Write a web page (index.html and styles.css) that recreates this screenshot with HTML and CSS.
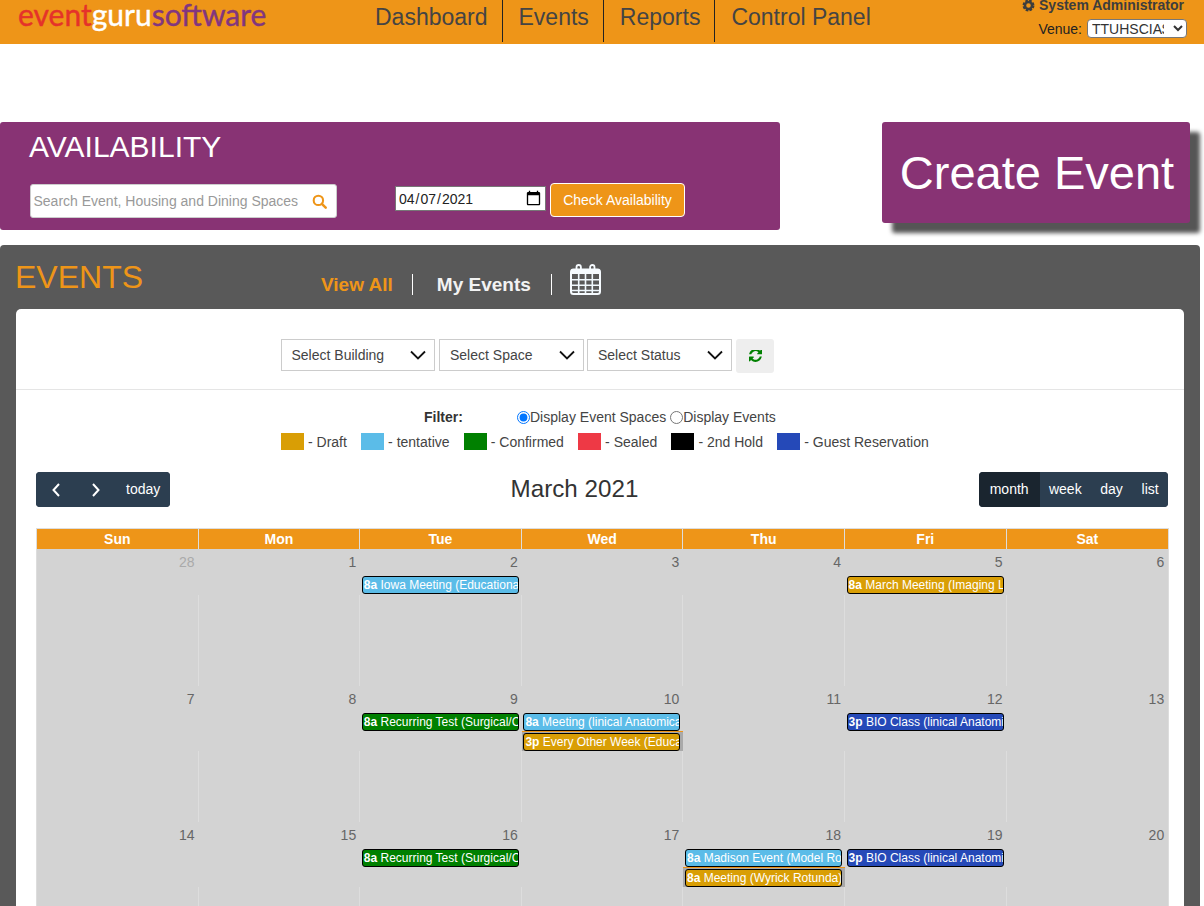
FILE: index.html
```html
<!DOCTYPE html>
<html lang="en">
<head>
<meta charset="utf-8">
<title>Event Guru Software</title>
<link rel="stylesheet" href="styles.css">
</head>
<body>
<header class="topbar">
  <div class="logo"><span class="logo-event">event</span><span class="logo-guru">guru</span><span class="logo-soft">software</span></div>
  <nav class="mainnav">
    <a class="navlink">Dashboard</a>
    <a class="navlink">Events</a>
    <a class="navlink">Reports</a>
    <a class="navlink navlink-last">Control Panel</a>
  </nav>
  <div class="userbox">
    <div class="username">
      <svg class="gear" viewBox="0 0 24 24"><circle cx="12" cy="12" r="8.5" fill="none" stroke="#3d3d3d" stroke-width="5" stroke-dasharray="4.6 2.07"/><circle cx="12" cy="12" r="6.5" fill="none" stroke="#3d3d3d" stroke-width="4.5"/></svg>
      System Administrator
    </div>
    <div class="venue">
      <label class="venue-label" for="venue">Venue:</label>
      <select id="venue" class="venue-select"><option>TTUHSCIA$ Main Campus</option></select>
    </div>
  </div>
</header>

<section class="toprow">
  <div class="avail">
    <h1 class="avail-title">AVAILABILITY</h1>
    <div class="avail-form">
      <div class="search">
        <span class="search-text">Search Event, Housing and Dining Spaces</span>
        <svg class="search-icon" viewBox="0 0 16 16"><circle cx="6.8" cy="6.8" r="5" fill="none" stroke="#ee9518" stroke-width="2.2"/><path d="M10.5 10.5 14.6 14.6" stroke="#ee9518" stroke-width="2.6" stroke-linecap="round"/></svg>
      </div>
      <input class="dateinput" type="date" value="2021-04-07">
      <button class="checkbtn">Check Availability</button>
    </div>
  </div>
  <button class="create">Create Event</button>
</section>

<section class="events">
  <div class="events-head">
    <h2 class="events-title">EVENTS</h2>
    <div class="tabs">
      <a class="tab tab-active">View All</a>
      <a class="tab tab-mine">My Events</a>
      <svg class="calicon" viewBox="0 0 31 31">
        <path d="M6.500 6V3.200a2.200 2.200 0 0 1 4.400 0V6M20.100 6V3.200a2.200 2.200 0 0 1 4.400 0V6" fill="none" stroke="#f6fbff" stroke-width="1.800"/>
        <rect x="1" y="5.500" width="29" height="24.500" rx="2.500" fill="none" stroke="#f6fbff" stroke-width="2"/>
        <rect x="1" y="5.500" width="29" height="4.500" fill="#f6fbff"/>
        <path d="M2 15.700h27M2 21.300h27M2 26.500h27M8.700 10v19M15.500 10v19M22.300 10v19" stroke="#f0f8fd" stroke-width="1.600"/>
      </svg>
    </div>
  </div>

  <div class="card">
    <div class="filters">
      <div class="fsel fsel-building"><span>Select Building</span><svg class="chev" viewBox="0 0 16 10"><path d="M1 1.500 8 8.500 15 1.500" fill="none" stroke="#111" stroke-width="1.800"/></svg></div>
      <div class="fsel fsel-space"><span>Select Space</span><svg class="chev" viewBox="0 0 16 10"><path d="M1 1.500 8 8.500 15 1.500" fill="none" stroke="#111" stroke-width="1.800"/></svg></div>
      <div class="fsel fsel-status"><span>Select Status</span><svg class="chev" viewBox="0 0 16 10"><path d="M1 1.500 8 8.500 15 1.500" fill="none" stroke="#111" stroke-width="1.800"/></svg></div>
      <button class="refresh"><svg class="refresh-icon" viewBox="0 128 1536 1536"><path fill="#008000" d="M1511 928q0 5-1 7-64 268-268 434.500t-478 166.500q-146 0-282.500-55t-243.500-157l-129 129q-19 19-45 19t-45-19-19-45v-448q0-26 19-45t45-19h448q26 0 45 19t19 45-19 45l-137 137q71 66 161 102t187 36q134 0 250-65t186-179q11-17 53-117 8-23 30-23h192q13 0 22.500 9.500t9.500 22.500zm25-800v448q0 26-19 45t-45 19h-448q-26 0-45-19t-19-45 19-45l138-138q-148-137-349-137-134 0-250 65t-186 179q-11 17-53 117-8 23-30 23h-199q-13 0-22.500-9.500t-9.500-22.500v-7q65-268 270-434.500t480-166.500q146 0 284 55.500t245 156.500l130-129q19-19 45-19t45 19 19 45z"/></svg></button>
    </div>

    <div class="filter-row">
      <span class="filter-label">Filter:</span>
      <label class="radio"><input class="radio-in" type="radio" name="disp" checked>Display Event Spaces</label>
      <label class="radio"><input class="radio-in" type="radio" name="disp">Display Events</label>
    </div>

    <div class="legend">
      <span class="legend-item"><i class="swatch draft"></i>- Draft</span>
      <span class="legend-item"><i class="swatch tentative"></i>- tentative</span>
      <span class="legend-item"><i class="swatch confirmed"></i>- Confirmed</span>
      <span class="legend-item"><i class="swatch sealed"></i>- Sealed</span>
      <span class="legend-item"><i class="swatch hold"></i>- 2nd Hold</span>
      <span class="legend-item"><i class="swatch guest"></i>- Guest Reservation</span>
    </div>

    <div class="cal-toolbar">
      <div class="btngroup">
        <button class="calbtn calbtn-arrow"><svg class="arrow" viewBox="0 0 10 16"><path d="M8 2 2.500 8 8 14" fill="none" stroke="#fff" stroke-width="2"/></svg></button>
        <button class="calbtn calbtn-arrow"><svg class="arrow" viewBox="0 0 10 16"><path d="M2 2 7.500 8 2 14" fill="none" stroke="#fff" stroke-width="2"/></svg></button>
        <button class="calbtn">today</button>
      </div>
      <h3 class="cal-title">March 2021</h3>
      <div class="btngroup">
        <button class="calbtn calbtn-active">month</button>
        <button class="calbtn calbtn-view">week</button>
        <button class="calbtn calbtn-view">day</button>
        <button class="calbtn calbtn-view">list</button>
      </div>
    </div>

    <div class="calendar">
      <div class="dow">
        <div class="dow-cell">Sun</div><div class="dow-cell">Mon</div><div class="dow-cell">Tue</div><div class="dow-cell">Wed</div><div class="dow-cell">Thu</div><div class="dow-cell">Fri</div><div class="dow-cell">Sat</div>
      </div>

      <div class="week">
        <div class="row nums"><div class="num muted">28</div><div class="num">1</div><div class="num">2</div><div class="num">3</div><div class="num">4</div><div class="num">5</div><div class="num">6</div></div>
        <div class="row evrow">
          <div></div><div></div>
          <div class="evcell"><div class="ev tentative"><b>8a</b> Iowa Meeting (Educational Building)</div></div>
          <div></div><div></div>
          <div class="evcell"><div class="ev draft"><b>8a</b> March Meeting (Imaging Lab)</div></div>
          <div></div>
        </div>
        <div class="row fill fill-a"><div></div><div></div><div></div><div></div><div></div><div></div><div></div></div>
      </div>

      <div class="week">
        <div class="row nums"><div class="num">7</div><div class="num">8</div><div class="num">9</div><div class="num">10</div><div class="num">11</div><div class="num">12</div><div class="num">13</div></div>
        <div class="row evrow">
          <div></div><div></div>
          <div class="evcell"><div class="ev confirmed"><b>8a</b> Recurring Test (Surgical/Clinical)</div></div>
          <div class="evcell"><div class="ev tentative"><b>8a</b> Meeting (linical Anatomical Lab)</div></div>
          <div></div>
          <div class="evcell"><div class="ev guest"><b>3p</b> BIO Class (linical Anatomical Lab)</div></div>
          <div></div>
        </div>
        <div class="row evrow">
          <div></div><div></div><div></div>
          <div class="evcell evcell-hl"><div class="ev draft"><b>3p</b> Every Other Week (Educational)</div></div>
          <div></div><div></div><div></div>
        </div>
        <div class="row fill fill-b"><div></div><div></div><div></div><div></div><div></div><div></div><div></div></div>
      </div>

      <div class="week">
        <div class="row nums"><div class="num">14</div><div class="num">15</div><div class="num">16</div><div class="num">17</div><div class="num">18</div><div class="num">19</div><div class="num">20</div></div>
        <div class="row evrow">
          <div></div><div></div>
          <div class="evcell"><div class="ev confirmed"><b>8a</b> Recurring Test (Surgical/Clinical)</div></div>
          <div></div>
          <div class="evcell"><div class="ev tentative"><b>8a</b> Madison Event (Model Room)</div></div>
          <div class="evcell"><div class="ev guest"><b>3p</b> BIO Class (linical Anatomical Lab)</div></div>
          <div></div>
        </div>
        <div class="row evrow">
          <div></div><div></div><div></div><div></div>
          <div class="evcell evcell-hl"><div class="ev draft"><b>8a</b> Meeting (Wyrick Rotunda)</div></div>
          <div></div><div></div>
        </div>
        <div class="row fill fill-b"><div></div><div></div><div></div><div></div><div></div><div></div><div></div></div>
      </div>
    </div>
  </div>
</section>
</body>
</html>
```

FILE: styles.css
```css
* { box-sizing: border-box; }
html, body { margin: 0; padding: 0; height: 906px; overflow: hidden; background: #fff; }
body { font-family: "Liberation Sans", Arial, sans-serif; color: #333; font-size: 14px; }
button { font-family: inherit; border: 0; cursor: pointer; }
h1, h2, h3 { margin: 0; font-weight: 400; }

.topbar { height: 44px; background: #ee9518; display: flex; position: relative; overflow: hidden; }
.logo { width: 375px; padding-left: 18px; font-family: Lato, sans-serif; font-size: 30px; line-height: 29px; letter-spacing: 0; -webkit-text-stroke: 0.4px currentColor; }
.logo-event { color: #e5322a; }
.logo-guru { color: #fff; }
.logo-soft { color: #82367f; }
.mainnav { display: flex; height: 42px; }
.navlink { font-size: 23px; line-height: 34px; color: #444; padding: 0 14px 0 16px; border-right: 1px solid #222; }
.navlink:first-child { padding-left: 0; }
.navlink-last { border-right: 0; }
.userbox { margin-left: auto; padding-right: 17px; display: flex; flex-direction: column; align-items: flex-end; }
.username { font-size: 14px; font-weight: 700; color: #3d3d3d; line-height: 14px; margin-top: -2px; display: flex; align-items: center; gap: 4px; padding-right: 3px; }
.gear { width: 13px; height: 13px; }
.venue { display: flex; align-items: center; gap: 5px; margin-top: 7px; }
.venue-label { font-size: 14px; color: #222; }
.venue-select { width: 100px; height: 19px; font-family: inherit; font-size: 14px; padding: 0 6px 0 0; border: 1px solid #777; border-radius: 4px; background: #fff; color: #333; }

.toprow { display: flex; align-items: flex-start; margin-top: 78px; }
.avail { width: 780px; height: 108px; background: #883374; border-radius: 3px; padding: 7px 0 0 29px; }
.avail-title { font-size: 30px; line-height: 36px; color: #fff; }
.avail-form { display: flex; align-items: flex-start; margin-top: 19px; margin-left: 1px; }
.search { width: 307px; height: 34px; background: #fff; border: 1px solid #ccc; border-radius: 3px; display: flex; align-items: center; justify-content: space-between; padding: 0 9px 0 2.5px; }
.search-text { color: #999; font-size: 14px; }
.search-icon { width: 15px; height: 15px; }
.dateinput { width: 151px; height: 25px; margin: 2px 0 0 58px; font-family: inherit; font-size: 14px; border: 1px solid #777; padding: 1px 2px; background: #fff; color: #222; }
.dateinput::-webkit-calendar-picker-indicator { width: 17px; height: 17px; padding: 0; margin: 0 1px 0 0; }
.checkbtn { width: 135px; height: 34px; margin: -1px 0 0 4px; background: #ee9518; color: #fff; border: 1px solid #fff; border-radius: 4px; font-size: 14px; }
.create { width: 308px; height: 101px; margin-left: 102px; padding: 0 0 0 2px; background: #883374; color: #fff; font-size: 47px; border-radius: 3px; box-shadow: 10px 10px 4px #555; }

.events { width: 1200px; height: 700px; margin-top: 15px; background: #595959; border-radius: 4px 4px 0 0; padding: 0 16px; }
.events-head { display: flex; height: 64px; }
.events-title { font-size: 32px; line-height: 38px; color: #ee9518; margin: 13px 0 0 -1px; width: 306px; }
.tabs { display: flex; align-items: center; height: 60px; padding-top: 18px; }
.tab { font-size: 19px; font-weight: 700; line-height: 21px; }
.tab-active { color: #ee9518; padding-right: 19px; border-right: 1px solid #fff; }
.tab-mine { color: #f2f2f2; padding: 0 20px 0 24px; border-right: 1px solid #fff; }
.calicon { width: 31px; height: 31px; margin: -10px 0 0 18px; }

.card { background: #fff; border-radius: 5px 5px 0 0; height: 640px; padding: 0 16px 0 20px; }
.filters { height: 81px; margin: 0 -16px 0 -20px; padding: 30px 0 0 265px; display: flex; align-items: flex-start; border-bottom: 1px solid #e5e5e5; }
.fsel { height: 32px; border: 1px solid #ccc; display: flex; align-items: center; justify-content: space-between; padding: 0 8px 0 10px; font-size: 14px; color: #444; }
.fsel-building { width: 154px; padding-left: 9.5px; }
.fsel-space { width: 145px; margin-left: 4px; }
.fsel-status { width: 145px; margin-left: 3px; }
.chev { width: 16px; height: 10px; }
.refresh { width: 38px; height: 34px; margin-left: 4px; background: #eee; border-radius: 3px; padding: 0; display: flex; align-items: center; justify-content: center; }
.refresh-icon { width: 13px; height: 13px; }

.filter-row { display: flex; align-items: center; height: 16px; margin-top: 19px; padding-left: 388px; font-size: 14px; color: #444; }
.filter-label { font-weight: 700; width: 93px; color: #333; }
.radio { display: inline-flex; align-items: center; margin-right: 4px; }
.radio-in { width: 13px; height: 13px; margin: 0; }

.legend { display: flex; align-items: center; gap: 14.2px; margin-top: 8px; height: 17px; padding-left: 245px; font-size: 14px; color: #444; }
.legend-item { display: inline-flex; align-items: center; gap: 4px; }
.swatch { display: block; width: 23px; height: 17px; }
.draft { background: #d99e05; }
.tentative { background: #5bbce8; }
.confirmed { background: #008000; }
.sealed { background: #ee3945; }
.hold { background: #000; }
.guest { background: #2549b8; }

.cal-toolbar { display: flex; align-items: center; justify-content: space-between; margin-top: 22px; height: 35px; }
.cal-title { font-size: 24.2px; color: #333; margin-top: -1px; }
.btngroup { display: flex; height: 35px; background: #2c3e50; border-radius: 4px; overflow: hidden; }
.calbtn { background: #2c3e50; color: #fff; font-size: 14px; padding: 0 10px 1px; height: 35px; display: flex; align-items: center; justify-content: center; }
.calbtn-view { padding: 0 9.33px 1px; }
.calbtn-arrow { width: 40px; padding: 0; }
.calbtn-active { background: #1a252f; padding: 0 11px 1px; }
.arrow { width: 10px; height: 16px; }

.calendar { margin: 21px -1.2px 0 0; border-top: 1px solid #ddd; border-left: 1px solid #ddd; border-right: 1px solid #ddd; }
.dow, .row { display: grid; grid-template-columns: repeat(7, 1fr); }
.dow { background: #ee9518; height: 20px; }
.dow-cell { text-align: center; color: #fff; font-weight: 700; font-size: 14px; line-height: 20px; border-right: 1px solid #ddd; }
.dow-cell:last-child { border-right: 0; }
.week { background: #d3d3d3; min-width: 0; }
.row > * { min-width: 0; }
.nums { height: 27px; }
.num { text-align: right; padding: 5px 4px 0 0; font-size: 14px; line-height: 16px; color: #666; }
.muted { color: #aaa; }
.evrow { height: 19px; }
.evcell { padding: 0 3px 0 1.6px; }
.evcell-hl { background: #a9a9a9; border-top: 1px solid #ee9518; margin-top: -1px; height: 20px; padding-top: 1px; }
.ev { height: 18px; border: 1px solid #000; border-radius: 3px; color: #fff; font-size: 12px; line-height: 16px; padding: 0 0 0 1px; white-space: nowrap; overflow: hidden; }
.fill > div { border-right: 1px solid #ddd; }
.fill > div:last-child { border-right: 0; }
.fill-a { height: 91px; }
.fill-b { height: 71px; }
```
